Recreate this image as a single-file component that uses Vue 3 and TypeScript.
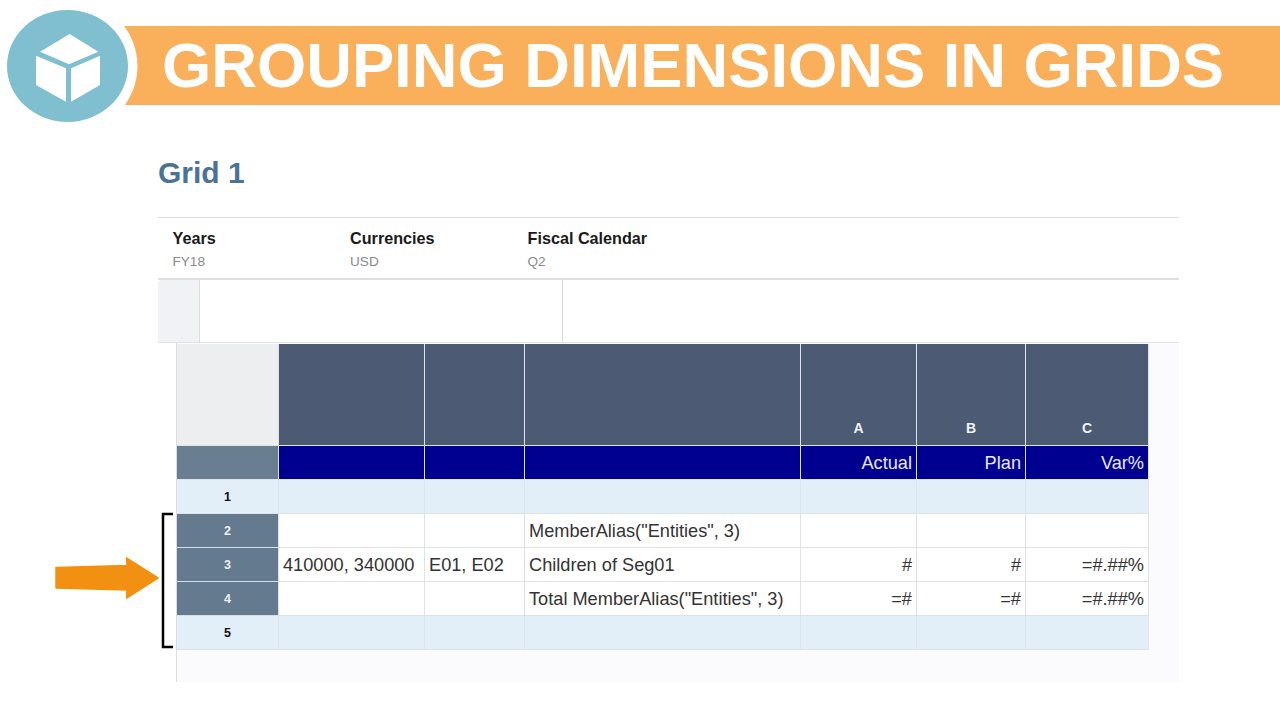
<script setup lang="ts">
interface GridRow {
  num: number
  alt: boolean
  cells: string[]
}

const povs = [
  { name: 'Years', value: 'FY18' },
  { name: 'Currencies', value: 'USD' },
  { name: 'Fiscal Calendar', value: 'Q2' }
]

const columns = ['', '', '', 'A', 'B', 'C']
const names = ['', '', '', 'Actual', 'Plan', 'Var%']

const rows: GridRow[] = [
  { num: 1, alt: true, cells: ['', '', '', '', '', ''] },
  { num: 2, alt: false, cells: ['', '', 'MemberAlias("Entities", 3)', '', '', ''] },
  { num: 3, alt: false, cells: ['410000, 340000', 'E01, E02', 'Children of Seg01', '#', '#', '=#.##%'] },
  { num: 4, alt: false, cells: ['', '', 'Total MemberAlias("Entities", 3)', '=#', '=#', '=#.##%'] },
  { num: 5, alt: true, cells: ['', '', '', '', '', ''] }
]
</script>

<template>
  <div class="page">
    <div class="banner">GROUPING DIMENSIONS IN GRIDS</div>

    <!-- logo sits over the banner's left end -->
    <svg class="logo" width="140" height="136" viewBox="0 0 140 136">
      <ellipse cx="67.5" cy="66" rx="70" ry="68" fill="#fff" />
      <ellipse cx="67.5" cy="66" rx="60.5" ry="56" fill="#7fbfd0" />
      <path d="M69.7 34 98.3 51.7 69 64.3 40 51.7Z" fill="#fff" />
      <path d="M36 55.7 66 68.3V101.7L36 85Z" fill="#fff" />
      <path d="M100 55.7 71 68.3V101.7L100 85Z" fill="#fff" />
    </svg>

    <h1 class="title">Grid 1</h1>

    <div class="panel">
      <div class="pov">
        <div v-for="p in povs" :key="p.name" class="pov-item">
          <div class="pov-name">{{ p.name }}</div>
          <div class="pov-value">{{ p.value }}</div>
        </div>
      </div>

      <div class="toolbar">
        <div class="tool-left"></div>
        <div class="tool-mid"></div>
      </div>

      <div class="grid-wrap">
        <div class="grid">
          <div class="cell corner"></div>
          <div v-for="(c, i) in columns" :key="'c' + i" class="cell col-head">{{ c }}</div>

          <div class="cell name-corner"></div>
          <div v-for="(n, i) in names" :key="'n' + i" class="cell col-name">{{ n }}</div>

          <template v-for="r in rows" :key="r.num">
            <div class="cell row-num" :class="{ 'row-num-alt': r.alt }">{{ r.num }}</div>
            <div
              v-for="(text, i) in r.cells"
              :key="i"
              class="cell body"
              :class="{ alt: r.alt, right: i > 2 }"
            >{{ text }}</div>
          </template>
        </div>
      </div>
    </div>

    <svg class="marker" width="125" height="140" viewBox="0 0 125 140">
      <path d="M18 2H8V135H18" fill="none" stroke="#000" stroke-width="2.5" />
    </svg>
    <svg class="arrow" width="108" height="44" viewBox="0 0 108 44">
      <path
        d="M2 11.5 73 9.5 72.5 2 104 22 72.5 42 73 34 2 32Z"
        fill="#f29111"
        stroke="#f29111"
        stroke-width="1.5"
        stroke-linejoin="round"
      />
    </svg>
  </div>
</template>

<style scoped>
.page {
  position: relative;
  width: 1280px;
  height: 720px;
  padding-top: 26px;
  box-sizing: border-box;
  overflow: hidden;
  background: #fff;
  font-family: "Liberation Sans", Arial, sans-serif;
}

.banner {
  margin-left: 100px;
  height: 79px;
  padding-left: 62px;
  background: #fab05a;
  color: #fff;
  font-size: 63.3px;
  font-weight: 700;
  line-height: 79px;
  white-space: nowrap;
}

.logo {
  position: absolute;
  left: 0;
  top: 0;
}

.title {
  margin: 50px 0 0 158px;
  font-size: 30px;
  line-height: 36px;
  font-weight: 700;
  color: #4a7396;
}

.panel {
  margin: 26px 0 0 158px;
  width: 1021px;
  border-top: 1px solid #dedede;
}

.pov {
  display: flex;
  height: 60px;
  padding-left: 14.5px;
  border-bottom: 2px solid #dedede;
}

.pov-item {
  width: 177.5px;
}

.pov-name {
  margin-top: 10px;
  font-size: 16.2px;
  line-height: 20px;
  font-weight: 700;
  color: #1a1a1a;
}

.pov-value {
  margin-top: 6px;
  font-size: 13.6px;
  line-height: 16px;
  color: #8a8a8a;
}

.toolbar {
  display: flex;
  height: 62px;
  border-bottom: 1px solid #e2e2e6;
}

.tool-left {
  width: 42px;
  box-sizing: border-box;
  background: #f1f2f6;
  border-right: 1px solid #dcdce0;
  border-top-left-radius: 4px;
}

.tool-mid {
  width: 363px;
  box-sizing: border-box;
  border-right: 1px solid #dcdce0;
}

.grid-wrap {
  margin-left: 18px;
  height: 339px;
  box-sizing: border-box;
  padding-top: 1px;
  background: #fbfbfe;
  border-left: 1px solid #dcdce0;
}

.grid {
  display: grid;
  grid-template-columns: 102px 146px 100px 276px 116px 109px 123px;
  grid-template-rows: 102px repeat(6, 34px);
  width: 972px;
}

.cell {
  box-sizing: border-box;
  display: flex;
  align-items: center;
  border-right: 1px solid #e0e1e4;
  border-bottom: 1px solid #e0e1e4;
  overflow: hidden;
  white-space: nowrap;
}

.corner {
  background: #eceef0;
}

.col-head {
  justify-content: center;
  align-items: flex-end;
  padding-bottom: 9px;
  background: #4c5a73;
  color: #f2f2f2;
  font-size: 14px;
  font-weight: 700;
  border-color: #dfe3ea;
}

.name-corner {
  background: #697e91;
  border-color: #dfe3ea;
}

.col-name {
  justify-content: flex-end;
  padding-top: 2px;
  padding-right: 4px;
  background: #000090;
  color: #e8e8f4;
  font-size: 18.2px;
  border-color: #dfe3ea;
}

.row-num {
  justify-content: center;
  background: #647a8e;
  color: #f0f0f0;
  font-size: 12.5px;
  font-weight: 700;
  border-color: #d6dee6;
}

.row-num-alt {
  background: #e2eef8;
  color: #111;
  border-color: #dde4ea;
}

.body {
  padding: 2px 4px 0;
  background: #fff;
  color: #333;
  font-size: 18.2px;
}

.alt {
  background: #e2eef8;
  border-color: #dde4ea;
}

.right {
  justify-content: flex-end;
}

.marker {
  position: absolute;
  left: 155px;
  top: 512px;
}

.arrow {
  position: absolute;
  left: 54px;
  top: 556px;
}
</style>
